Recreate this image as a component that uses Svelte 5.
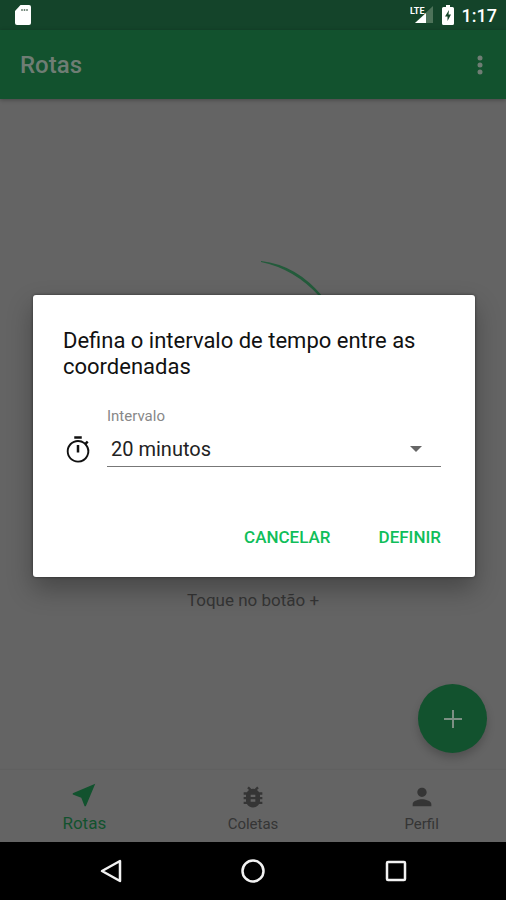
<script>
	let interval = '20';
	let showDialog = true;
	let active = 'Rotas';

	const intervals = ['5', '10', '15', '20', '30', '60'];

	const tabs = [
		{
			name: 'Rotas',
			icon: 'M21 3L3 10.53v.98l6.84 2.65L12.48 21h.98L21 3z'
		},
		{
			name: 'Coletas',
			icon: 'M20 8h-2.81a5.985 5.985 0 0 0-1.82-1.96L17 4.41 15.59 3l-2.17 2.17a6.002 6.002 0 0 0-2.83 0L8.41 3 7 4.41l1.62 1.63C7.88 6.55 7.26 7.22 6.81 8H4v2h2.09c-.05.33-.09.66-.09 1v1H4v2h2v1c0 .34.04.67.09 1H4v2h2.81c1.04 1.79 2.97 3 5.19 3s4.15-1.21 5.19-3H20v-2h-2.09c.05-.33.09-.66.09-1v-1h2v-2h-2v-1c0-.34-.04-.67-.09-1H20V8zm-6 8h-4v-2h4v2zm0-4h-4v-2h4v2z'
		},
		{
			name: 'Perfil',
			icon: 'M12 12c2.21 0 4-1.79 4-4s-1.79-4-4-4-4 1.79-4 4 1.79 4 4 4zm0 2c-2.67 0-8 1.34-8 4v2h16v-2c0-2.66-5.33-4-8-4z'
		}
	];

	const closeDialog = () => (showDialog = false);
	const openDialog = () => (showDialog = true);
</script>

<div class="screen">
	<div class="status-bar">
		<svg width="16" height="20" viewBox="0 0 16 20">
			<path
				d="M5.500 0H14a2 2 0 0 1 2 2v16a2 2 0 0 1-2 2H2a2 2 0 0 1-2-2V6z"
				fill="#fff"
			/>
			<path d="M7 4v2M9.500 4v2M12 4v2" stroke="#6c8274" stroke-width="1.500" />
		</svg>
		<div class="status-icons">
			<svg class="signal" width="24" height="20" viewBox="0 0 24 20">
				<path d="M23 1v17H5z" fill="#4d7259" />
				<path d="M16 8v10H5z" fill="#fff" />
				<text x="0" y="9">LTE</text>
			</svg>
			<svg width="12" height="20" viewBox="0 0 12 20">
				<path
					d="M4 0h4v2h2.500A1.500 1.500 0 0 1 12 3.500v15a1.500 1.500 0 0 1-1.500 1.500h-9A1.500 1.500 0 0 1 0 18.500v-15A1.500 1.500 0 0 1 1.500 2H4z"
					fill="#fff"
				/>
				<path d="M7 5L3 11.500h2.500V16L9 9.500H6.500z" fill="#14442a" />
			</svg>
			<span class="clock">1:17</span>
		</div>
	</div>

	<header>
		<h1>Rotas</h1>
		<button class="more" aria-label="Mais opções">
			<svg width="28" height="28" viewBox="0 0 28 28" fill="currentColor">
				<circle cx="14" cy="7" r="2.500" />
				<circle cx="14" cy="14" r="2.500" />
				<circle cx="14" cy="21" r="2.500" />
			</svg>
		</button>
	</header>

	<main>
		<svg class="drawing" width="176" height="320" viewBox="0 0 176 320">
			<path d="M96 1Q132 5 158 37L155 37Q130 9 96 2z" fill="#235b3b" />
		</svg>
		<p>Toque no botão +</p>
		<button class="fab" aria-label="Adicionar" on:click={openDialog}>
			<svg width="28" height="28" viewBox="0 0 28 28">
				<path d="M14 5v18M5 14h18" stroke="currentColor" stroke-width="2" />
			</svg>
		</button>
	</main>

	<nav class="tabs">
		{#each tabs as tab}
			<button class:active={active === tab.name} on:click={() => (active = tab.name)}>
				<svg viewBox="0 0 24 24" fill="currentColor">
					<path d={tab.icon} />
				</svg>
				<span>{tab.name}</span>
			</button>
		{/each}
	</nav>

	<div class="system-bar">
		<button aria-label="Voltar">
			<svg width="28" height="28" viewBox="0 0 28 28">
				<path d="M23 4v20L5 14z" />
			</svg>
		</button>
		<button aria-label="Início">
			<svg width="28" height="28" viewBox="0 0 28 28">
				<circle cx="14" cy="14" r="10.500" />
			</svg>
		</button>
		<button aria-label="Recentes">
			<svg width="28" height="28" viewBox="0 0 28 28">
				<rect x="6" y="5" width="18" height="18" rx="1" />
			</svg>
		</button>
	</div>

	{#if showDialog}
		<div class="overlay">
			<form
				class="dialog"
				role="dialog"
				aria-labelledby="dialog-title"
				on:submit|preventDefault={closeDialog}
			>
				<h2 id="dialog-title">Defina o intervalo de tempo entre as coordenadas</h2>

				<div class="field">
					<svg class="timer" width="30" height="30" viewBox="0 0 24 24" fill="currentColor">
						<path
							d="M15 1H9v2h6V1zm-4 13h2V8h-2v6zm8.030-6.610l1.420-1.420c-.43-.51-.9-.99-1.410-1.410l-1.420 1.420A8.962 8.962 0 0 0 12 4c-4.970 0-9 4.030-9 9s4.020 9 9 9a8.994 8.994 0 0 0 7.030-14.610zM12 20.500c-4.140 0-7.500-3.360-7.500-7.500s3.360-7.500 7.500-7.500 7.500 3.360 7.500 7.500-3.360 7.500-7.500 7.500z"
						/>
					</svg>
					<div class="control">
						<label for="interval">Intervalo</label>
						<div class="select">
							<select id="interval" bind:value={interval}>
								{#each intervals as minutes}
									<option value={minutes}>{minutes} minutos</option>
								{/each}
							</select>
							<svg width="12" height="6" viewBox="0 0 12 6">
								<path d="M0 0h12L6 6z" fill="#666" />
							</svg>
						</div>
					</div>
				</div>

				<div class="actions">
					<button type="button" on:click={closeDialog}>CANCELAR</button>
					<button type="submit">DEFINIR</button>
				</div>
			</form>
		</div>
	{/if}
</div>

<style>
	:global(body) {
		margin: 0;
	}

	.screen {
		position: relative;
		display: flex;
		flex-direction: column;
		min-height: 100vh;
		color: #353535;
		background-color: #646464;
		font-family: Roboto, 'Liberation Sans', sans-serif;
	}

	button {
		padding: 0;
		border: none;
		background: none;
		color: inherit;
		font-family: inherit;
		cursor: pointer;
	}

	svg {
		display: block;
	}

	h1,
	h2,
	p {
		margin: 0;
	}

	.status-bar {
		display: flex;
		justify-content: space-between;
		align-items: center;
		height: 30px;
		padding: 0 9px 0 15px;
		background-color: #14442a;
	}

	.status-icons {
		display: flex;
		align-items: center;
		gap: 8px;
	}

	.signal text {
		fill: #fff;
		font-family: 'Liberation Sans', sans-serif;
		font-size: 8px;
		font-weight: 700;
	}

	.signal text {
		font-family: Roboto, 'Liberation Sans', sans-serif;
		font-size: 9px;
	}

	.clock {
		color: #fff;
		font-size: 18px;
		font-weight: 500;
	}

	header {
		display: flex;
		justify-content: space-between;
		align-items: center;
		height: 69px;
		padding: 0 12px 0 20px;
		color: #6f7d74;
		background-color: #12522e;
		box-shadow: 0 1px 4px rgba(0, 0, 0, 0.3);
	}

	h1 {
		font-size: 24px;
		font-weight: 500;
	}

	main {
		position: relative;
		display: flex;
		flex: 1;
		flex-direction: column;
		justify-content: center;
		align-items: center;
		gap: 10px;
	}

	p {
		font-size: 17px;
		line-height: 20px;
	}

	.fab {
		position: absolute;
		right: 19px;
		bottom: 17px;
		display: flex;
		justify-content: center;
		align-items: center;
		width: 69px;
		height: 69px;
		border-radius: 50%;
		color: #7c8f83;
		background-color: #12522e;
		box-shadow: 0 5px 9px rgba(0, 0, 0, 0.2);
	}

	.tabs {
		display: grid;
		grid-template-columns: repeat(3, 1fr);
		height: 72px;
		box-shadow: 0 -1px 1px rgba(0, 0, 0, 0.03);
	}

	.tabs button {
		display: flex;
		flex-direction: column;
		justify-content: flex-end;
		align-items: center;
		gap: 3px;
		padding-bottom: 8px;
		font-size: 15px;
		line-height: 20px;
	}

	.tabs svg {
		width: 28px;
		height: 28px;
	}

	.tabs button.active {
		padding-bottom: 9px;
		color: #12522e;
		font-size: 17px;
	}

	.tabs .active svg {
		width: 30px;
		height: 30px;
	}

	.system-bar {
		display: flex;
		justify-content: center;
		align-items: center;
		gap: 114px;
		height: 58px;
		background-color: #000;
	}

	.system-bar svg {
		fill: none;
		stroke: #f2f2f2;
		stroke-width: 2.5;
		stroke-linejoin: round;
	}

	.overlay {
		position: absolute;
		inset: 30px 0 58px;
		display: flex;
		justify-content: center;
		align-items: center;
		padding: 0 31px 0 33px;
	}

	.dialog {
		box-sizing: border-box;
		width: 100%;
		max-width: 560px;
		padding: 33px 34px 20px 30px;
		border-radius: 3px;
		color: #111;
		background-color: #fff;
		box-shadow:
			0 0 3px rgba(0, 0, 0, 0.5),
			0 12px 26px rgba(0, 0, 0, 0.3);
	}

	h2 {
		font-size: 22px;
		font-weight: 400;
		line-height: 26px;
	}

	.field {
		display: flex;
		align-items: flex-end;
		gap: 14px;
		margin-top: 26px;
	}

	.timer {
		margin-bottom: 2px;
	}

	.control {
		flex: 1;
	}

	label {
		display: block;
		color: #888;
		font-size: 15px;
		line-height: 20px;
	}

	.select {
		display: flex;
		align-items: center;
		margin-top: 6px;
		border-bottom: 1px solid #777;
	}

	select {
		flex: 1;
		height: 34px;
		padding: 0 24px 0 4px;
		margin-right: -12px;
		border: none;
		appearance: none;
		color: #222;
		background: none;
		font-family: inherit;
		font-size: 20px;
	}

	.select svg {
		margin-right: 19px;
		pointer-events: none;
	}

	.actions {
		display: flex;
		justify-content: flex-end;
		gap: 48px;
		margin-top: 50px;
	}

	.actions button {
		height: 40px;
		color: #10be5a;
		font-size: 17px;
		font-weight: 500;
	}
</style>
